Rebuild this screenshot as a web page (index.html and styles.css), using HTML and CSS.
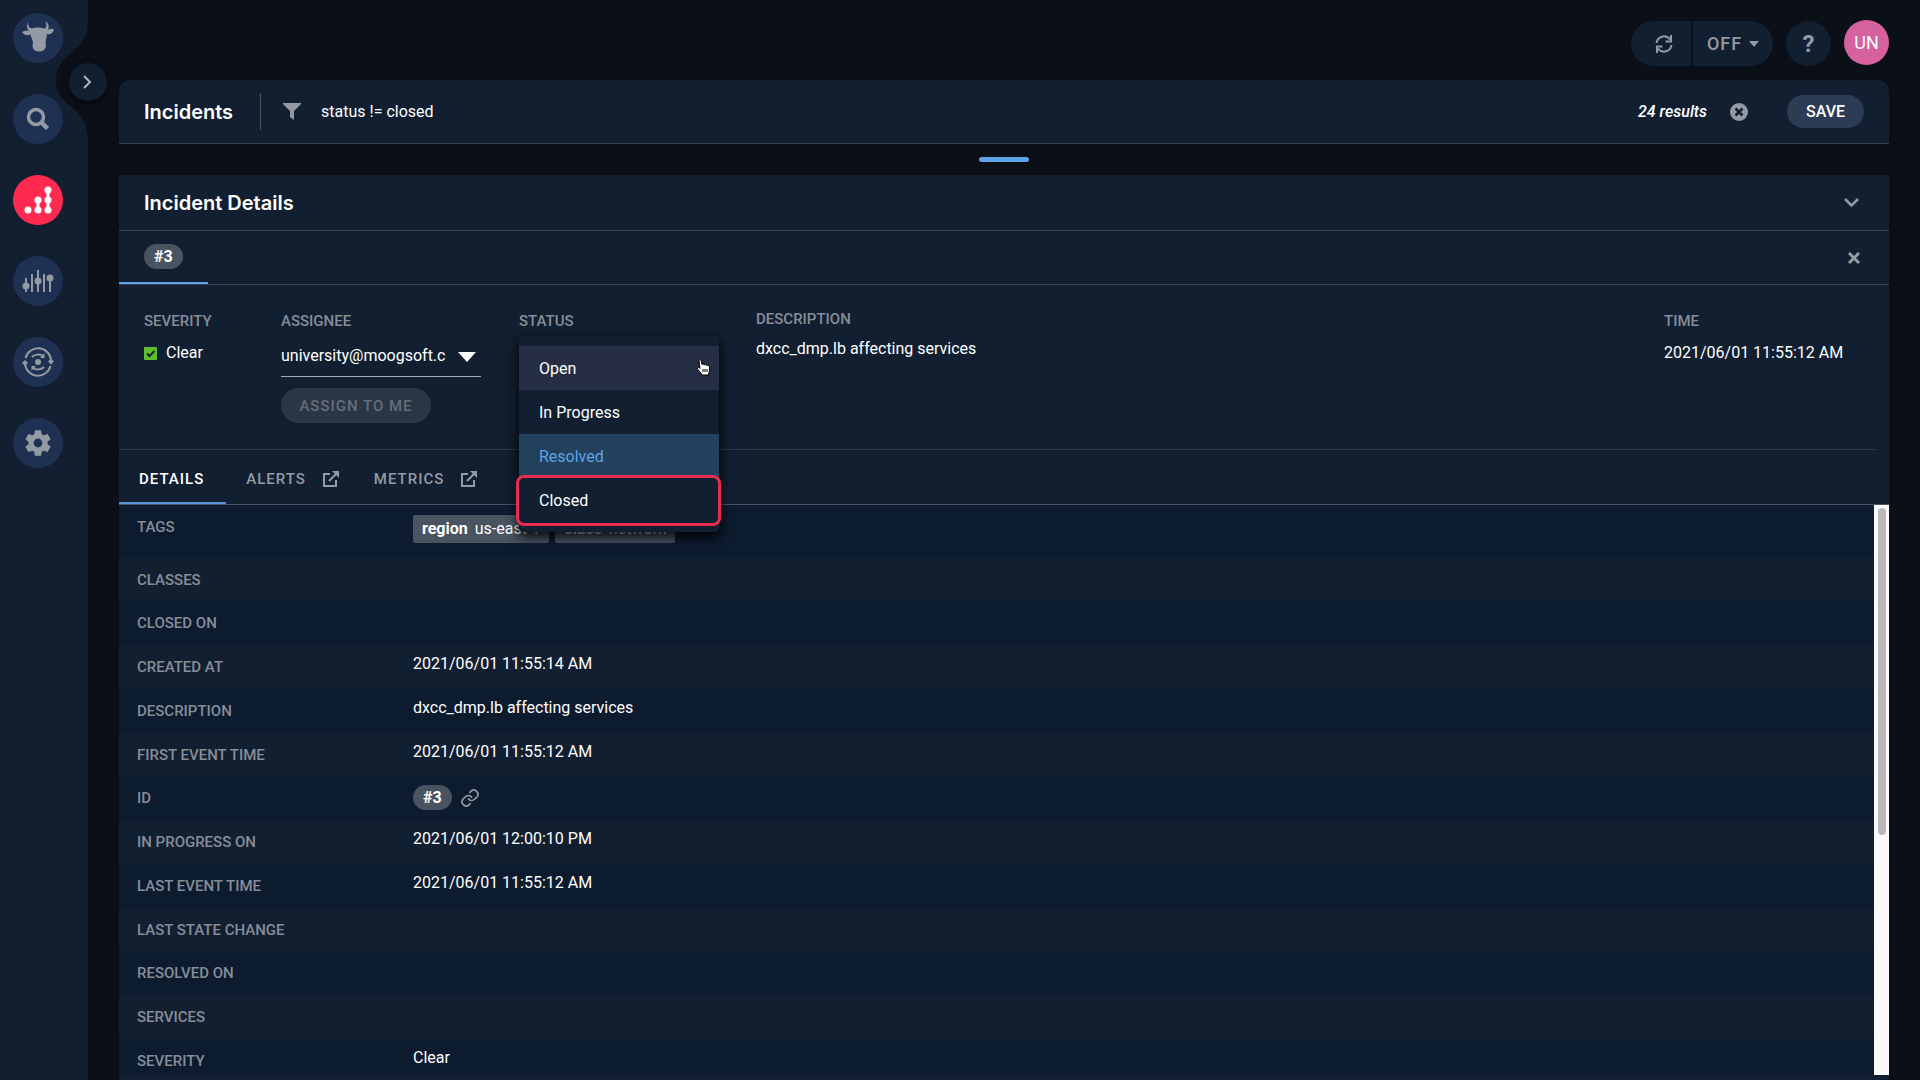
FILE: index.html
```html
<!DOCTYPE html>
<html lang="en">
<head>
  <meta charset="utf-8">
  <title>Incidents</title>
  <meta name="viewport" content="width=device-width, initial-scale=1.0">
  <link rel="stylesheet" href="styles.css">
</head>
<body>
  <div class="sidebar">
    <div class="sidebar-fill"></div>
    <svg class="sidebar-top" width="88" height="150" viewBox="0 0 88 150">
      <path d="M0 0H88V22C88 54 56 50 56 81C56 108 88 104 88 142V150H0Z" fill="currentColor"/>
    </svg>
    <nav class="nav">
      <a class="nav-item" href="#" aria-label="Home">
        <svg width="32" height="34" viewBox="0 2 32 34" fill="currentColor">
          <path d="M6.500 3C5.500 6 6.500 8.500 9.500 9.500C13 8 19 8 22.500 9.500C25 8.500 25 6 23 2.500C27 4 27.500 8 26 11C28 9.500 30 9.500 32 10.500C31 14.500 28 16 25 15C25 18 23.500 21 23.500 24C25 29 22 32.500 17 32.500C12 32.500 9.500 29 11 24C11 21 8.500 18 8.500 15.500C5 17 1.500 16 0 13C2.500 11.500 5 11 7.500 12C5 10.500 4 6 6.500 3Z"/>
        </svg>
      </a>
      <a class="nav-item" href="#" aria-label="Search">
        <svg width="24" height="24" viewBox="0 0 24 24" fill="none" stroke="currentColor" stroke-width="3.500">
          <circle cx="10" cy="10" r="7.500"/><path d="M15 15L21.500 21.500" stroke-width="4.500"/>
        </svg>
      </a>
      <a class="nav-item active" href="#" aria-label="Incidents">
        <svg width="28" height="28" viewBox="0 0 28 28" fill="currentColor">
          <path d="M14 14V24M24 4V24" stroke="currentColor" stroke-width="3"/>
          <circle cx="4" cy="24" r="3.500"/>
          <circle cx="14" cy="24" r="3.500"/><circle cx="14" cy="14" r="3.500"/>
          <circle cx="24" cy="24" r="3.500"/><circle cx="24" cy="14" r="3.500"/><circle cx="24" cy="4" r="3.500"/>
        </svg>
      </a>
      <a class="nav-item" href="#" aria-label="Metrics">
        <svg width="32" height="24" viewBox="0 0 32 24" fill="currentColor">
          <path d="M4 9V23M10 5V23M16 1V23M22 5V23M28 6V23" stroke="currentColor" stroke-width="2"/>
          <circle cx="4" cy="17" r="3.500"/><circle cx="16" cy="12" r="3.500"/><circle cx="28" cy="9" r="3.500"/>
        </svg>
      </a>
      <a class="nav-item" href="#" aria-label="Correlation">
        <svg width="32" height="32" viewBox="0 0 32 32" fill="none" stroke="currentColor" stroke-width="2">
          <path d="M3.500 12A13 13 0 0 1 29 14M28.500 20A13 13 0 0 1 3 18"/>
          <path d="M10 11C13 8 18 8 21 10M22 21C19 24 14 24 11 22"/>
          <path d="M18 12L22.500 12V7ZM14 20H9.500V25Z" fill="currentColor" stroke="none"/>
          <circle cx="16" cy="16" r="3" fill="currentColor" stroke="none"/>
          <path d="M3 14L6 17L3 20L0 17ZM29 12.500L32 15.500L29 18.500L26 15.500Z" fill="currentColor" stroke="none"/>
        </svg>
      </a>
      <a class="nav-item" href="#" aria-label="Settings">
        <svg width="32" height="32" viewBox="0 0 24 24" fill="currentColor">
          <path d="M19.140 12.940c.04-.3.06-.61.06-.94 0-.32-.02-.64-.07-.94l2.030-1.580c.18-.14.23-.41.12-.61l-1.920-3.320c-.12-.22-.37-.29-.59-.22l-2.390.96c-.5-.38-1.030-.7-1.620-.94l-.36-2.540c-.04-.24-.24-.41-.48-.41h-3.840c-.24 0-.43.17-.47.41l-.36 2.540c-.59.24-1.130.57-1.620.94l-2.390-.96c-.22-.08-.47 0-.59.22L2.740 8.870c-.12.21-.08.47.12.61l2.030 1.580c-.05.3-.09.63-.09.94s.02.64.07.94l-2.030 1.580c-.18.14-.23.41-.12.61l1.920 3.320c.12.22.37.29.59.22l2.390-.96c.5.38 1.030.7 1.620.94l.36 2.540c.05.24.24.41.48.41h3.840c.24 0 .44-.17.47-.41l.36-2.540c.59-.24 1.130-.56 1.620-.94l2.390.96c.22.08.47 0 .59-.22l1.920-3.320c.12-.22.07-.47-.12-.61zM12 15.300A3.300 3.300 0 1 1 12 8.700a3.300 3.300 0 0 1 0 6.600z"/>
        </svg>
      </a>
    </nav>
    <button class="expand" aria-label="Expand menu">
      <svg width="10" height="14" viewBox="0 0 10 14" fill="none" stroke="currentColor" stroke-width="2"><path d="M1 1L7 7L1 13"/></svg>
    </button>
  </div>

  <div class="main">
    <header class="topbar">
      <div class="refresh-group">
        <button class="refresh" aria-label="Refresh">
          <svg width="18" height="18" viewBox="0 0 18 18" fill="none" stroke="currentColor" stroke-width="2">
            <path d="M1.500 8A7.500 7.500 0 0 1 15 4.500M16 0V6.500H10.500M16.500 10A7.500 7.500 0 0 1 3 13.500M2 18V11.500H7.500"/>
          </svg>
        </button>
        <button class="off">OFF
          <svg width="10" height="6" viewBox="0 0 10 6" fill="currentColor"><path d="M0 0H10L5 6Z"/></svg>
        </button>
      </div>
      <button class="help" aria-label="Help">?</button>
      <button class="avatar">UN</button>
    </header>

    <section class="filter-bar">
      <h1 class="title">Incidents</h1>
      <div class="filter">
        <svg width="18" height="17" viewBox="0 0 18 17" fill="currentColor"><path d="M0 0H18V1L11 8V17L7 14V8L0 1Z"/></svg>
        <span>status != closed</span>
      </div>
      <em class="results">24 results</em>
      <button class="icon-button clear" aria-label="Clear filter">
        <svg width="18" height="18" viewBox="0 0 18 18"><circle cx="9" cy="9" r="9" fill="currentColor"/><path d="M5.500 5.500L12.500 12.500M12.500 5.500L5.500 12.500" stroke="#121f31" stroke-width="2.500"/></svg>
      </button>
      <button class="save">SAVE</button>
    </section>

    <div class="drag-handle"></div>

    <section class="details">
      <div class="details-header">
        <h2 class="title">Incident Details</h2>
        <button class="icon-button" aria-label="Collapse">
          <svg width="15" height="10" viewBox="0 0 15 10" fill="none" stroke="currentColor" stroke-width="2.500"><path d="M1 1L7.500 7.500L14 1"/></svg>
        </button>
      </div>

      <div class="incident-tabs">
        <button class="incident-tab"><span class="badge">#3</span></button>
        <button class="icon-button" aria-label="Close">
          <svg width="12" height="12" viewBox="0 0 12 12" stroke="currentColor" stroke-width="3"><path d="M1 1L11 11M11 1L1 11"/></svg>
        </button>
      </div>

      <div class="summary">
        <div class="field severity">
          <span class="label">SEVERITY</span>
          <span class="value">
            <svg width="13" height="13" viewBox="0 0 13 13"><rect width="13" height="13" rx="1" fill="#5cbf2e"/><path d="M3 6.500L5.500 9L10.500 4" fill="none" stroke="#121f31" stroke-width="2"/></svg>
            Clear
          </span>
        </div>
        <div class="field assignee">
          <label class="label" for="assignee">ASSIGNEE</label>
          <div class="select-wrap">
            <select id="assignee">
              <option>university@moogsoft.com</option>
            </select>
            <svg class="caret" width="18" height="10" viewBox="0 0 18 10" fill="currentColor"><path d="M0 0H18L9 10Z"/></svg>
          </div>
          <button class="assign" disabled>ASSIGN TO ME</button>
        </div>
        <div class="field status">
          <span class="label">STATUS</span>
          <div class="menu">
            <button class="option hover">Open</button>
            <button class="option">In Progress</button>
            <button class="option selected">Resolved</button>
            <button class="option marked">Closed</button>
            <svg class="pointer" width="15" height="17" viewBox="0 0 15 17" fill="#fff" stroke="#000" stroke-width="1">
              <path d="M3 1.500C3.500 .5 5 .5 5.300 2L6 5.500C7 4.800 8 5 8.300 6C9.300 5.200 10.500 5.500 10.800 6.500C12 6 13.300 6.500 13.500 8V11C13.500 13 12.500 14 12.500 16H6C5 13.500 2 11.500 1 9C1 8 2.500 7.500 4 9.500Z"/>
              <path d="M7 10V13M9 10V13M11 10V13"/>
            </svg>
          </div>
        </div>
        <div class="field description">
          <span class="label">DESCRIPTION</span>
          <span class="value">dxcc_dmp.lb affecting services</span>
        </div>
        <div class="field time">
          <span class="label">TIME</span>
          <span class="value">2021/06/01 11:55:12 AM</span>
        </div>
      </div>

      <nav class="view-tabs">
        <a class="view-tab current" href="#">DETAILS</a>
        <a class="view-tab" href="#">ALERTS
          <svg width="16" height="16" viewBox="0 0 16 16" fill="none" stroke="currentColor" stroke-width="2"><path d="M7 3H1V15H13V9M6 10L14 2"/><path d="M9 0H16V7Z" fill="currentColor" stroke="none"/></svg>
        </a>
        <a class="view-tab" href="#">METRICS
          <svg width="16" height="16" viewBox="0 0 16 16" fill="none" stroke="currentColor" stroke-width="2"><path d="M7 3H1V15H13V9M6 10L14 2"/><path d="M9 0H16V7Z" fill="currentColor" stroke="none"/></svg>
        </a>
      </nav>

      <div class="scroll-area">
        <div class="table-wrap">
          <table>
            <tr class="tags-row"><th>TAGS</th><td><div class="tags"><span class="tag"><b>region</b> us-east-1</span><span class="tag"><b>class</b> network</span></div></td></tr>
            <tr><th>CLASSES</th><td></td></tr>
            <tr><th>CLOSED ON</th><td></td></tr>
            <tr><th>CREATED AT</th><td>2021/06/01 11:55:14 AM</td></tr>
            <tr><th>DESCRIPTION</th><td>dxcc_dmp.lb affecting services</td></tr>
            <tr><th>FIRST EVENT TIME</th><td>2021/06/01 11:55:12 AM</td></tr>
            <tr><th>ID</th><td><div class="id-cell"><span class="badge">#3</span>
              <a class="link" href="#" aria-label="Copy link">
                <svg width="20" height="20" viewBox="0 0 24 24" fill="none" stroke="currentColor" stroke-width="2" stroke-linecap="round"><path d="M10 13a5 5 0 0 0 7.500.5l3-3a5 5 0 0 0-7-7l-1.700 1.700M14 11a5 5 0 0 0-7.500-.5l-3 3a5 5 0 0 0 7 7l1.700-1.700"/></svg>
              </a></div></td></tr>
            <tr><th>IN PROGRESS ON</th><td>2021/06/01 12:00:10 PM</td></tr>
            <tr><th>LAST EVENT TIME</th><td>2021/06/01 11:55:12 AM</td></tr>
            <tr><th>LAST STATE CHANGE</th><td></td></tr>
            <tr><th>RESOLVED ON</th><td></td></tr>
            <tr><th>SERVICES</th><td></td></tr>
            <tr><th>SEVERITY</th><td>Clear</td></tr>
          </table>
        </div>
        <div class="scrollbar"><div class="thumb"></div></div>
      </div>
    </section>
  </div>
</body>
</html>
```

FILE: styles.css
```css
* {
  box-sizing: border-box;
}

body {
  margin: 0;
  height: 100vh;
  display: flex;
  overflow: hidden;
  background: #0b0f17;
  color: #fff;
  font-family: Roboto, "Liberation Sans", sans-serif;
  font-size: 16px;
  line-height: 20px;
}

button, select {
  font: inherit;
  color: inherit;
  background: none;
  border: none;
  padding: 0;
  cursor: pointer;
}

a {
  color: inherit;
  text-decoration: none;
}

svg {
  display: block;
  flex: none;
}

/* sidebar */
.sidebar {
  position: relative;
  flex: none;
  width: 88px;
  color: #121f31;
}

.sidebar-top {
  position: absolute;
  top: 0;
  left: 0;
}

.sidebar-fill {
  position: absolute;
  inset: 149px 0 0 0;
  background: #121f31;
}

.nav {
  position: relative;
  display: flex;
  flex-direction: column;
  gap: 31px;
  padding: 13px;
}

.nav-item {
  width: 50px;
  height: 50px;
  border-radius: 50%;
  background: #1f3152;
  color: #949aa3;
  display: flex;
  align-items: center;
  justify-content: center;
}

.nav-item.active {
  background: #ff2a50;
  color: #fff;
}

.expand {
  position: absolute;
  top: 63px;
  right: -19px;
  width: 38px;
  height: 38px;
  border-radius: 50%;
  background: #121f31;
  color: #b0b5bc;
  box-shadow: 0 3px 6px rgba(0, 0, 0, 0.5);
  display: flex;
  align-items: center;
  justify-content: center;
}

/* top bar */
.main {
  flex: 1;
  min-width: 0;
  display: flex;
  flex-direction: column;
  padding: 20px 31px 0;
}

.topbar {
  display: flex;
  justify-content: flex-end;
  gap: 13px;
  height: 60px;
}

.refresh-group {
  display: flex;
  gap: 2px;
}

.refresh-group button,
.help,
.avatar {
  height: 45px;
  background: #121f31;
  color: #949aa3;
  display: flex;
  align-items: center;
  justify-content: center;
}

.refresh-group,
.help {
  margin-top: 1px;
}

.refresh-group .refresh {
  width: 60px;
  padding-left: 5px;
  border-radius: 23px 0 0 23px;
}

.refresh-group .off {
  width: 80px;
  gap: 7px;
  border-radius: 0 23px 23px 0;
  font-size: 18px;
  font-weight: 500;
  letter-spacing: 1px;
}

.help {
  width: 45px;
  border-radius: 50%;
  font-size: 24px;
  font-weight: 700;
}

.avatar {
  width: 45px;
  border-radius: 50%;
  background: #d6619f;
  color: #fff;
  font-size: 18px;
}

/* filter bar */
.filter-bar {
  display: flex;
  align-items: center;
  height: 64px;
  padding: 0 25px;
  background: #121f31;
  border-bottom: 1px solid #364254;
  border-radius: 12px 12px 0 0;
}

.title {
  margin: 0;
  font-family: Inter, "Liberation Sans", sans-serif;
  font-size: 20px;
  font-weight: 600;
}

.filter {
  flex: 1;
  display: flex;
  align-items: center;
  gap: 20px;
  height: 37px;
  margin-left: 27px;
  padding-left: 22px;
  border-left: 1px solid #4a5464;
}

.filter svg,
.icon-button {
  color: #949aa3;
}

.results {
  font-weight: 500;
}

.clear {
  margin: 0 39px 0 23px;
}

.save {
  width: 77px;
  height: 33px;
  border-radius: 17px;
  background: #2d3c55;
  font-weight: 500;
}

.drag-handle {
  align-self: center;
  width: 50px;
  height: 5px;
  margin: 13px 0;
  border-radius: 3px;
  background: #5ea3e6;
}

/* incident details */
.details {
  flex: 1;
  min-height: 0;
  display: flex;
  flex-direction: column;
  padding-bottom: 5px;
  background: #121f31;
}

.details-header,
.incident-tabs {
  flex: none;
  display: flex;
  justify-content: space-between;
  border-bottom: 1px solid #364254;
}

.details-header {
  align-items: center;
  height: 56px;
  padding: 0 30px 0 25px;
}

.incident-tabs {
  height: 54px;
  padding-right: 29px;
}

.incident-tab {
  width: 89px;
  padding: 0 0 1px 25px;
  border-bottom: 2px solid #5ea3e6;
  text-align: left;
}

.badge {
  display: inline-block;
  padding: 3px 10px 2px;
  border-radius: 13px;
  background: #4a5360;
  font-weight: 700;
}

.summary {
  flex: none;
  display: flex;
  height: 165px;
  margin-right: 13px;
  padding: 26px 0 0 25px;
  border-bottom: 1px solid #2d3a4d;
}

.field {
  display: flex;
  flex-direction: column;
}

.label,
th {
  color: #868d98;
  font-size: 15px;
  font-weight: 500;
}

.value {
  display: flex;
  align-items: center;
  gap: 9px;
  margin-top: 12px;
}

.severity {
  width: 137px;
}

.assignee {
  width: 238px;
}

.status {
  position: relative;
  width: 237px;
}

.description {
  flex: 1;
  margin-top: -2px;
}

.description .value {
  margin-top: 10px;
}

.time {
  width: 212px;
}

.select-wrap {
  position: relative;
  width: 200px;
  margin-top: 5px;
}

.select-wrap select {
  appearance: none;
  width: 100%;
  height: 41px;
  padding-right: 35px;
  border-bottom: 1px solid #a5a9b0;
}

.caret {
  position: absolute;
  top: 16px;
  right: 5px;
  pointer-events: none;
}

.assign {
  width: 150px;
  height: 35px;
  margin-top: 11px;
  border-radius: 18px;
  background: #2a3546;
  color: #646d79;
  font-size: 15px;
  font-weight: 500;
  letter-spacing: 1px;
}

/* status menu */
.menu {
  position: absolute;
  top: 25px;
  left: 0;
  z-index: 2;
  width: 200px;
  padding: 10px 0;
  border-radius: 4px;
  background: #121f31;
  box-shadow: 0 4px 12px 1px rgba(0, 0, 0, 0.9);
}

.option {
  position: relative;
  display: block;
  width: 100%;
  height: 44px;
  padding: 2px 0 0 20px;
  text-align: left;
}

.option.hover {
  background: #252e42;
}

.option.selected {
  background: #23405c;
  color: #5ea3e6;
}

.option.marked::after {
  content: "";
  position: absolute;
  inset: -3px -2px -4px -3px;
  border: 3px solid #e72c50;
  border-radius: 8px;
}

.pointer {
  position: absolute;
  top: 23px;
  right: 8px;
}

/* view tabs */
.view-tabs {
  flex: none;
  display: flex;
  height: 55px;
  border-bottom: 1px solid #4a5360;
}

.view-tab {
  display: flex;
  align-items: center;
  gap: 17px;
  padding: 5px 15px 0 20px;
  color: #949aa3;
  font-size: 15px;
  font-weight: 500;
  letter-spacing: 1px;
  border-bottom: 2px solid transparent;
}

.view-tab.current {
  padding-right: 22px;
  color: #fff;
  border-color: #5b93d6;
}

/* details table */
.scroll-area {
  flex: 1;
  min-height: 0;
  display: flex;
  overflow: hidden;
}

.table-wrap {
  flex: 1;
  overflow: hidden;
}

table {
  width: 100%;
  border-collapse: collapse;
}

tr {
  height: 44px;
}

tr:nth-child(4n+2) {
  height: 43px;
}

tr:nth-child(odd) {
  background: #0d1b2e;
}

tr.tags-row {
  height: 53px;
}

th, td {
  padding: 0;
  text-align: left;
  vertical-align: top;
}

th {
  width: 294px;
  padding: 12px 0 0 18px;
}

td {
  padding-top: 9px;
}

.tags,
.id-cell {
  display: flex;
  align-items: center;
  gap: 6px;
}

.tags {
  padding-top: 1px;
}

.tag {
  height: 28px;
  padding: 4px 9px;
  border-radius: 2px;
  background: #4a5360;
  white-space: nowrap;
}

.tag b {
  margin-right: 3px;
}

.link {
  margin-left: 2px;
  color: #949aa3;
}

.scrollbar {
  width: 15px;
  padding: 3px 3px 3px 4px;
  background: #fafafa;
}

.thumb {
  height: 58%;
  border-radius: 4px;
  background: #b9b9b9;
}
```
